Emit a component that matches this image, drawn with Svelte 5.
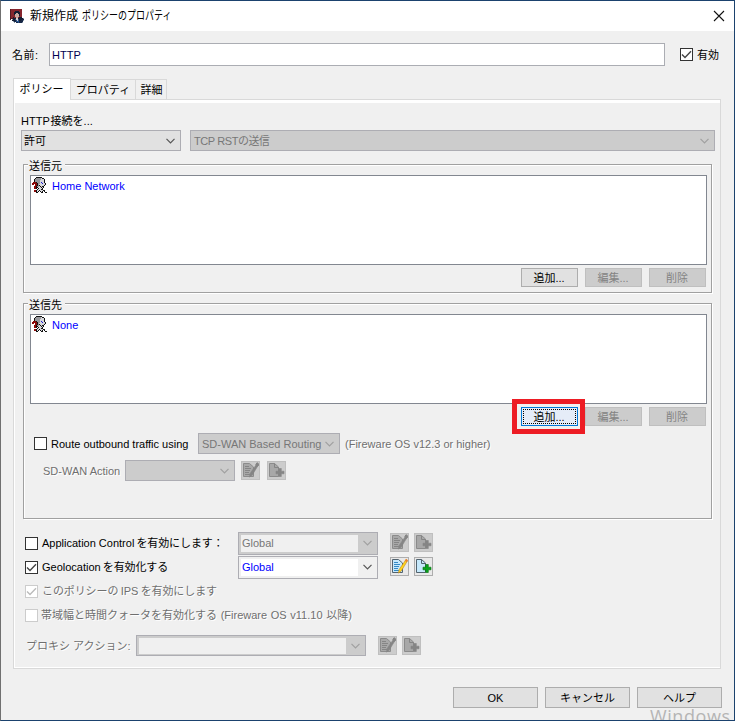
<script>
  let name = $state('HTTP')
  let tab = $state(0)

  const tabs = ['ポリシー', 'プロパティ', '詳細']

  const groups = [
    { title: '送信元', item: 'Home Network', focused: false },
    { title: '送信先', item: 'None', focused: true }
  ]

  const personColors = { k: '#111111', g: '#98989c', w: '#d6d6da', r: '#8b0808', b: '#1717d8' }
  const person = [
    '....kkkkkk.....',
    '...kgggggwkk...',
    '..kggggggwwwk..',
    '..kgggggwwwwk..',
    '..kgggggwwwwk..',
    '.rrrkgggwbwwk..',
    'rrrrrkggwwbwwk.',
    'rr.rrkgwwwwwwk.',
    '...rrkgkwwwwk..',
    '..rrkggwkwkk...',
    '..rrkkwwwkwk...',
    '..rrk.kwwwk....',
    '.....kwwwkk....',
    '..rrkwwkwwwkk..',
    '..rrkwk.kwk.k..',
    '....kk...kk..kk'
  ]

  const logoColors = { r: '#85252d', d: '#531922', s: '#c9aaa2', h: '#151d32', b: '#26528c', n: '#172846', g: '#8795a5', p: '#d9d0ce' }
  const logo = [
    'drrrrrrrrrrr...',
    'drrrrrrrrrrr...',
    'drrrrhhhhrrr...',
    'drrrhhhhhhrr...',
    'drrrhhsshhrr...',
    'drrrhsssshrr...',
    'drrrrsssshrr...',
    'drrrrssssrrr...',
    'drrhrrssrhhh...',
    'dddhhhpphhhhhg.',
    'd.ghhbppbhhhnn.',
    '..hhhnbpbhhnng.',
    '...gnnbbbnnnn..',
    '....g.nnbnnng..'
  ]
</script>

{#snippet pixels(rows, colors)}
  <svg width="15" height={rows.length} shape-rendering="crispEdges">
    {#each rows as row, y}
      {#each row.split('') as c, x}
        {#if colors[c]}<rect {x} {y} width="1" height="1" fill={colors[c]} />{/if}
      {/each}
    {/each}
  </svg>
{/snippet}

{#snippet chevron()}
  <svg class="chevron" width="9" height="6" viewBox="0 0 9 6"><path d="M.5 .8 4.5 4.8 8.5 .8" /></svg>
{/snippet}

{#snippet check(on, disabled)}
  <span class="check" class:disabled>
    {#if on}<svg width="11" height="11" viewBox="0 0 11 11"><path d="M1 5.5 4 8.5 10 2.3" /></svg>{/if}
  </span>
{/snippet}

{#snippet tools(disabled)}
  <div class="tools" class:disabled>
    <button {disabled} aria-label="edit">
      <svg width="17" height="17" viewBox="0 0 17 17">
        <path class="page" d="M1.5 1.5h6l4 3.5v9.5h-10z" />
        <path class="lines" d="M3 4.5h4M3 6.5h6M3 8.5h5M3 10.5h4M3 12.5h6" />
        <path class="pencil" d="M15 1.5l1.5 1.3-6.3 10.3-2.7 2 .5-3.4z" />
        <path class="eraser" d="M15 .7l2 1.6-1.3 2-1.9-1.6z" />
      </svg>
    </button>
    <button {disabled} aria-label="new">
      <svg width="17" height="17" viewBox="0 0 17 17">
        <path class="page" d="M1.5 1.5h5l4 3.5v9.5h-9z" />
        <path class="fold" d="M6.5 1.5v4h4" />
        <path class="plus" d="M10.7 6.5h2.6v2.7H16v2.6h-2.7v2.7h-2.6v-2.7H8V9.2h2.7z" />
      </svg>
    </button>
  </div>
{/snippet}

<div class="window">
  <header>
    {@render pixels(logo, logoColors)}
    <h1>新規作成 <span>ポリシーのプロパティ</span></h1>
    <svg class="close" width="12" height="12" viewBox="0 0 12 12"><path d="M1 1 11 11M11 1 1 11" /></svg>
  </header>

  <div class="name-row">
    <label for="name">名前:</label>
    <input id="name" bind:value={name} />
    {@render check(true, false)}
    <span class="enabled">有効</span>
  </div>

  <nav>
    {#each tabs as label, i}
      <button class:active={tab === i} onclick={() => (tab = i)}>{label}</button>
    {/each}
  </nav>

  <main>
    <p class="connection">HTTP <span>接続を...</span></p>
    <div class="selects">
      <div class="select allow">許可{@render chevron()}</div>
      <div class="select disabled reset">TCP RST<span>の送信</span>{@render chevron()}</div>
    </div>

    {#each groups as group, i}
      <section class="group" class:last={i === 1}>
        <h2>{group.title}</h2>
        <div class="list">
          {@render pixels(person, personColors)}
          <span>{group.item}</span>
        </div>
        <div class="actions">
          <div class="add">
            <button class="btn" class:focused={group.focused}>追加...</button>
            {#if group.focused}<div class="highlight"></div>{/if}
          </div>
          <button class="btn" disabled>編集...</button>
          <button class="btn" disabled>削除</button>
        </div>

        {#if i === 1}
          <div class="route">
            {@render check(false, false)}
            <span class="route-label">Route outbound traffic using</span>
            <div class="select disabled routing">SD-WAN Based Routing{@render chevron()}</div>
            <span class="muted">(Fireware OS v12.3 or higher)</span>
          </div>
          <div class="wan">
            <span class="muted">SD-WAN Action</span>
            <div class="select disabled wan-action">{@render chevron()}</div>
            {@render tools(true)}
          </div>
        {/if}
      </section>
    {/each}

    <div class="options">
      <div class="option">
        {@render check(false, false)}
        <span class="text">Application Control <span class="ja">を有効にします：</span></span>
        <div class="combo disabled"><span>Global</span>{@render chevron()}</div>
        {@render tools(true)}
      </div>
      <div class="option">
        {@render check(true, false)}
        <span class="text">Geolocation <span class="ja">を有効化する</span></span>
        <div class="combo"><span>Global</span>{@render chevron()}</div>
        {@render tools(false)}
      </div>
      <div class="option">
        {@render check(true, true)}
        <span class="text ips muted">このポリシーの IPS を有効にします</span>
      </div>
      <div class="option">
        {@render check(false, true)}
        <span class="text wide muted">帯域幅と時間クォータを有効化する (Fireware OS v11.10 以降)</span>
      </div>
    </div>

    <div class="proxy">
      <span class="muted">プロキシ アクション:</span>
      <div class="combo disabled"><span></span>{@render chevron()}</div>
      {@render tools(true)}
    </div>
  </main>

  <footer>
    <button class="btn">OK</button>
    <button class="btn">キャンセル</button>
    <button class="btn">ヘルプ</button>
  </footer>
  <div class="watermark">Windows</div>
</div>

<style>
  :global(body) {
    background: #f0f0f0;
    overflow: hidden;
  }

  .window {
    position: relative;
    box-sizing: border-box;
    width: 735px;
    height: 721px;
    overflow: hidden;
    background: #f0f0f0;
    border: 1px solid #1b426e;
    border-left-color: #707070;
    font-family: 'Liberation Sans', 'Noto Sans CJK JP', sans-serif;
    font-size: 11px;
    line-height: 16px;
    color: #000;
    white-space: nowrap;
  }

  .window * {
    box-sizing: border-box;
  }

  svg {
    display: block;
    flex: none;
  }

  button {
    margin: 0;
    padding: 0;
    font: inherit;
    color: inherit;
  }

  header {
    display: flex;
    align-items: center;
    height: 30px;
    padding: 0 9px;
    background: #fff;
  }

  h1 {
    display: flex;
    gap: 4px;
    width: 200px;
    margin: 0 auto 0 5px;
    font-size: 12px;
    font-weight: 400;
  }

  h1 span {
    transform: scaleX(0.75);
    transform-origin: left;
  }

  .close path {
    stroke: #111;
    stroke-width: 1.1;
  }

  .name-row {
    display: flex;
    align-items: center;
    height: 23px;
    margin-top: 12px;
    padding-left: 11px;
  }

  label {
    width: 37px;
    letter-spacing: 0.5px;
  }

  input {
    width: 616px;
    height: 23px;
    margin-right: 15px;
    padding: 0 2px;
    border: 1px solid #abadb3;
    background: #fff;
    font: inherit;
    color: #000050;
    outline: none;
  }

  .enabled {
    margin-left: 4px;
  }

  .check {
    flex: none;
    width: 13px;
    height: 13px;
    border: 1px solid #333;
    background: #fff;
  }

  .check path {
    fill: none;
    stroke: #444;
    stroke-width: 1.4;
  }

  .check.disabled {
    border-color: #ccc;
  }

  .check.disabled path {
    stroke: #bbb;
  }

  nav {
    display: flex;
    align-items: flex-end;
    height: 21px;
    margin: 12px 0 0 12px;
  }

  nav button {
    height: 20px;
    border: 1px solid #d9d9d9;
    border-left: 0;
    border-bottom: 0;
    background: #f0f0f0;
    line-height: 19px;
    padding-top: 1px;
  }

  nav button:nth-child(1) {
    width: 58px;
    border-left: 1px solid #d9d9d9;
  }

  nav button:nth-child(2) {
    width: 65px;
  }

  nav button:nth-child(3) {
    width: 31px;
    padding-left: 1px;
  }

  nav button.active {
    position: relative;
    height: 22px;
    margin-bottom: -1px;
    padding: 0 1px 1px 0;
    background: #fff;
  }

  main {
    width: 708px;
    height: 570px;
    margin-left: 12px;
    padding-left: 7px;
    border: 1px solid #d9d9d9;
    box-shadow: inset 0 3px #fff, inset 1px 0 #fff, inset 0 -1px #fff;
  }

  .connection {
    margin: 13px 0 0;
  }

  .connection span {
    margin-left: -2px;
  }

  .selects {
    display: flex;
    gap: 9px;
    margin-top: 1px;
  }

  .select {
    display: flex;
    align-items: center;
    flex: none;
    height: 21px;
    padding: 0 5px 0 3px;
    border: 1px solid #adadb3;
    background: #e1e1e1;
  }

  .select.disabled {
    background: #ccc;
    color: #777;
  }

  .allow {
    width: 160px;
    padding-left: 2px;
  }

  .reset {
    width: 525px;
    letter-spacing: -0.4px;
  }

  .reset span {
    letter-spacing: -0.6px;
  }

  .chevron {
    margin-left: auto;
  }

  .chevron path {
    fill: none;
    stroke: #555;
    stroke-width: 1.2;
  }

  .disabled .chevron path {
    stroke: #a0a0a0;
  }

  .group {
    width: 689px;
    height: 129px;
    margin: 13px 0 0 2px;
    padding: 0 5px 0 6px;
    border: 1px solid #a0a0a0;
    box-shadow: inset 1px 1px #fff, 1px 1px #fff;
  }

  .group.last {
    height: 216px;
    margin-top: 10px;
  }

  h2 {
    width: 37px;
    margin: -7px 0 0 -2px;
    padding-left: 1px;
    background: #f0f0f0;
    font-size: 11px;
    font-weight: 400;
    line-height: 16px;
  }

  .list {
    display: flex;
    width: 677px;
    height: 90px;
    margin-top: 1px;
    padding: 1px;
    border: 1px solid #828790;
    background: #fff;
    color: #00f;
  }

  .list span {
    margin: 1px 0 0 5px;
  }

  .actions {
    display: flex;
    justify-content: flex-end;
    gap: 7px;
    margin-top: 3px;
  }

  .btn {
    display: block;
    width: 57px;
    height: 19px;
    padding: 1px 1px 0 0;
    border: 1px solid #adadad;
    background: #e1e1e1;
    line-height: 16px;
  }

  .btn:disabled {
    border-color: #bfbfbf;
    background: #ccc;
    color: #838383;
  }

  .btn.focused {
    border-color: #0078d7;
    background: #e5ecf8;
    outline: 1px dotted #000;
    outline-offset: -3px;
  }

  .add {
    position: relative;
  }

  .highlight {
    position: absolute;
    inset: -8px -7px -8px -9px;
    border: 5px solid #ed1c24;
    pointer-events: none;
  }

  .route,
  .wan {
    display: flex;
    align-items: center;
    height: 21px;
  }

  .route {
    margin: 7px 0 0 4px;
  }

  .route-label {
    width: 147px;
    margin-left: 4px;
  }

  .routing {
    width: 142px;
    margin-right: 5px;
  }

  .wan {
    margin: 6px 0 0 13px;
  }

  .wan > .muted {
    width: 82px;
  }

  .wan-action {
    width: 110px;
  }

  .muted {
    color: #6f6f6f;
    text-shadow: 1px 1px #fff;
  }

  .tools {
    display: flex;
    gap: 5px;
    margin: -1px 0 0 12px;
  }

  .wan .tools {
    gap: 7px;
    margin-left: 6px;
  }

  .tools button {
    width: 19px;
    height: 19px;
    border: 1px solid #adadad;
    background: #e9e9e9;
  }

  .tools.disabled button {
    border-color: #bfbfbf;
    background: #ccc;
  }

  .page {
    fill: #c5e8fb;
    stroke: #52636f;
  }

  .lines {
    fill: none;
    stroke: #3489c5;
  }

  .fold {
    fill: none;
    stroke: #52636f;
  }

  .pencil {
    fill: #ffd51c;
    stroke: #bd8520;
    stroke-width: 0.6;
  }

  .eraser {
    fill: #e88532;
  }

  .plus {
    fill: #08a51c;
    stroke: #006b0b;
    stroke-width: 0.6;
  }

  .disabled .page {
    fill: #a8a8a8;
    stroke: #8b8b8b;
  }

  .disabled .lines,
  .disabled .fold {
    stroke: #858585;
  }

  .disabled .pencil,
  .disabled .eraser,
  .disabled .plus {
    fill: #858585;
    stroke: #858585;
  }

  .options {
    margin: 12px 0 0 4px;
  }

  .option {
    display: flex;
    align-items: center;
    height: 24px;
  }

  .text {
    width: 196px;
    margin-left: 4px;
  }

  .ja {
    margin-left: -1px;
    letter-spacing: -0.1px;
  }

  .text.ips {
    letter-spacing: -0.1px;
    word-spacing: -0.5px;
  }

  .text.wide {
    margin-left: 3px;
    word-spacing: 0.6px;
  }

  .combo {
    display: flex;
    align-items: center;
    flex: none;
    width: 140px;
    height: 23px;
    padding: 0 5px 0 2px;
    border: 1px solid #adadb3;
    background: #f0f0f0;
    color: #00f;
  }

  .combo span {
    flex: none;
    width: 117px;
    height: 17px;
    padding-left: 1px;
    background: #fff;
    line-height: 16px;
  }

  .combo.disabled {
    background: #ccc;
    color: #777;
  }

  .combo.disabled span {
    background: #f0f0f0;
  }

  .proxy {
    display: flex;
    align-items: center;
    height: 21px;
    margin: 8px 0 0 5px;
  }

  .proxy > .muted {
    width: 110px;
  }

  .proxy .combo {
    width: 230px;
    height: 21px;
  }

  .proxy .combo span {
    width: 207px;
    height: 16px;
  }

  footer {
    display: flex;
    justify-content: flex-end;
    gap: 7px;
    margin: 18px 12px 0 0;
  }

  footer .btn {
    width: 85px;
    height: 21px;
    padding: 1px 0 0;
    line-height: 18px;
  }

  .watermark {
    position: absolute;
    left: 649px;
    top: 705px;
    font-family: 'Open Sans', sans-serif;
    font-size: 18px;
    line-height: 20px;
    letter-spacing: 0.6px;
    color: #b5b5b5;
  }
</style>
